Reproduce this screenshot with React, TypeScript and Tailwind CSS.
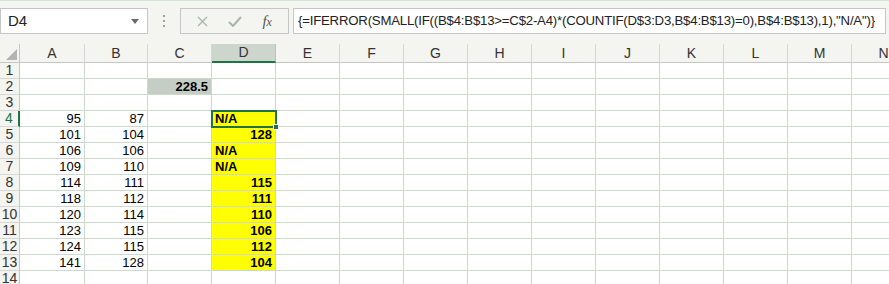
import React from "react";

const cols = ["A", "B", "C", "D", "E", "F", "G", "H", "I", "J", "K", "L", "M", "N"];
const widths: Record<string, string> = {
  A: "w-[65px]",
  B: "w-[63px]",
};

type Cell = { v: string; bold?: boolean; left?: boolean; bg?: string };

const data: Record<number, Record<string, Cell>> = {
  2: { C: { v: "228.5", bold: true, bg: "bg-[#c4cec4]" } },
  4: { A: { v: "95" }, B: { v: "87" }, D: { v: "N/A", bold: true, left: true, bg: "bg-[#ffff00]" } },
  5: { A: { v: "101" }, B: { v: "104" }, D: { v: "128", bold: true, bg: "bg-[#ffff00]" } },
  6: { A: { v: "106" }, B: { v: "106" }, D: { v: "N/A", bold: true, left: true, bg: "bg-[#ffff00]" } },
  7: { A: { v: "109" }, B: { v: "110" }, D: { v: "N/A", bold: true, left: true, bg: "bg-[#ffff00]" } },
  8: { A: { v: "114" }, B: { v: "111" }, D: { v: "115", bold: true, bg: "bg-[#ffff00]" } },
  9: { A: { v: "118" }, B: { v: "112" }, D: { v: "111", bold: true, bg: "bg-[#ffff00]" } },
  10: { A: { v: "120" }, B: { v: "114" }, D: { v: "110", bold: true, bg: "bg-[#ffff00]" } },
  11: { A: { v: "123" }, B: { v: "115" }, D: { v: "106", bold: true, bg: "bg-[#ffff00]" } },
  12: { A: { v: "124" }, B: { v: "115" }, D: { v: "112", bold: true, bg: "bg-[#ffff00]" } },
  13: { A: { v: "141" }, B: { v: "128" }, D: { v: "104", bold: true, bg: "bg-[#ffff00]" } },
};

const rows = Array.from({ length: 14 }, (_, i) => i + 1);

function Toolbar() {
  return (
    <div className="h-[44px] shrink-0 bg-[#f4f4f1] border-t border-[#d3e3d3] flex items-start pt-[7px] font-['Liberation_Sans',sans-serif]">
      {/* name box */}
      <div className="w-[148px] h-[26px] bg-white border border-[#c6c6c6] flex items-center justify-between pl-[7px] pr-[8px]">
        <span className="text-[15px] text-[#222]">D4</span>
        <svg width="8" height="5" viewBox="0 0 8 5">
          <path d="M0 0 L8 0 L4 5 Z" fill="#6b6b6b" />
        </svg>
      </div>
      {/* grip */}
      <div className="w-[32px] h-[26px] flex flex-col items-center justify-center gap-[3px]">
        <span className="w-[2px] h-[2px] bg-[#a0a0a0]" />
        <span className="w-[2px] h-[2px] bg-[#a0a0a0]" />
        <span className="w-[2px] h-[2px] bg-[#a0a0a0]" />
      </div>
      {/* cancel / enter / fx */}
      <div className="w-[109px] h-[26px] border border-[#c6c6c6] flex items-center justify-around px-[6px]">
        <svg width="11" height="11" viewBox="0 0 11 11">
          <path d="M1 1 L10 10 M10 1 L1 10" stroke="#a9b5a9" strokeWidth="1.3" />
        </svg>
        <svg width="14" height="11" viewBox="0 0 14 11">
          <path d="M1 6 L5 10 L13 1" stroke="#a9b5a9" strokeWidth="2" fill="none" />
        </svg>
        <span className="font-['Liberation_Serif',serif] italic text-[15px] text-[#555] leading-none">
          f<span className="text-[12px]">x</span>
        </span>
      </div>
      {/* formula */}
      <div className="ml-[4px] w-[593px] h-[26px] bg-white border border-[#c6c6c6] flex items-center pl-[4px] overflow-hidden whitespace-nowrap">
        <span className="text-[13.2px] text-[#222] tracking-[-0.2px]">
          {'{=IFERROR(SMALL(IF((B$4:B$13>=C$2-A4)*(COUNTIF(D$3:D3,B$4:B$13)=0),B$4:B$13),1),"N/A")}'}
        </span>
      </div>
    </div>
  );
}

function HeaderRow() {
  return (
    <div className="flex h-[19px] bg-[#f4f4f1]">
      <div className="w-[20px] shrink-0 border-r border-b border-[#c6c6c6] relative">
        <svg className="absolute right-[2px] bottom-[2px]" width="11" height="11" viewBox="0 0 11 11">
          <path d="M11 0 L11 11 L0 11 Z" fill="#b4b4b4" />
        </svg>
      </div>
      {cols.map((c) => (
        <div
          key={c}
          className={`${widths[c] ?? "w-[64px]"} shrink-0 flex items-center justify-center text-[14px] text-[#333] border-r ${
            c === "D"
              ? "bg-[#cdd6cd] border-b-2 border-b-[#217346] border-r-[#b8c4b8]"
              : "border-b border-[#c6c6c6] border-r-[#d6d6d6]"
          }`}
        >
          {c}
        </div>
      ))}
    </div>
  );
}

export default function App() {
  return (
    <div className="w-[889px] h-[284px] overflow-hidden bg-white flex flex-col">
      <Toolbar />
      <div className="font-['Liberation_Sans',sans-serif] relative">
        <HeaderRow />
        {rows.map((r) => (
          <div key={r} className="flex h-[16px]">
            <div
              className={`w-[20px] shrink-0 bg-[#f4f4f1] border-b border-[#d6d6d6] flex items-center justify-center text-[14px] ${
                r === 4 ? "text-[#217346] border-r-2 border-r-[#217346]" : "text-[#333] border-r border-r-[#c6c6c6]"
              }`}
            >
              {r}
            </div>
            {cols.map((c) => {
              const cell = data[r]?.[c];
              return (
                <div
                  key={c}
                  className={`${widths[c] ?? "w-[64px]"} shrink-0 border-r border-b border-[#cbdacd] flex items-center text-[13px] leading-none text-black px-[3px] ${
                    cell?.bg ?? ""
                  } ${cell?.left ? "justify-start" : "justify-end"} ${cell?.bold ? "font-bold" : ""}`}
                >
                  {cell?.v}
                </div>
              );
            })}
          </div>
        ))}
        {/* active cell D4 */}
        <div className="absolute left-[211px] top-[66px] w-[66px] h-[18px] border-2 border-[#217346] pointer-events-none">
          <div className="absolute right-[-4px] bottom-[-4px] w-[6px] h-[6px] bg-[#217346] border border-white" />
        </div>
      </div>
    </div>
  );
}
